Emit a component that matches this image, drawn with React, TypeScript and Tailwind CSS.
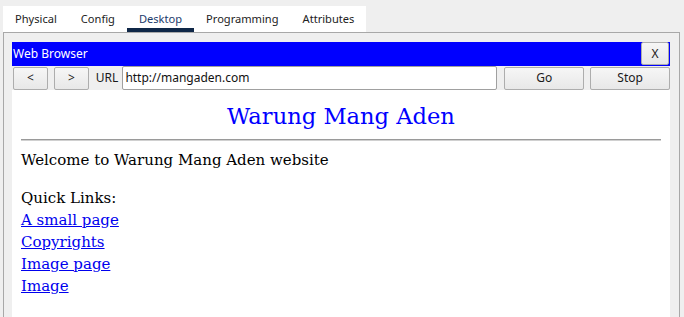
import React from "react";

const tabs = ["Physical", "Config", "Desktop", "Programming", "Attributes"];

function Btn({ children, className = "" }: { children: React.ReactNode; className?: string }) {
  return (
    <div
      className={`flex items-center justify-center rounded-[2px] border border-[#adadad] bg-gradient-to-b from-[#f6f6f6] to-[#e8e8e8] text-[12px] text-[#1a1a1a] ${className}`}
    >
      {children}
    </div>
  );
}

export default function App() {
  return (
    <div
      className="w-[684px] h-[317px] overflow-hidden bg-[#efefef]"
      style={{ fontFamily: '"Noto Sans", "Open Sans", sans-serif' }}
    >
      <div className="pl-[3px] pt-[6px]">
        <div className="flex h-[26px] w-[363px] bg-white">
          {tabs.map((t) => (
            <div
              key={t}
              className={`relative flex items-center px-3 pt-[1px] text-[11.1px] ${
                t === "Desktop" ? "text-[#1b3a6b]" : "text-[#222]"
              }`}
            >
              {t}
              {t === "Desktop" && (
                <div className="absolute bottom-0 left-0 right-0 h-[4px] bg-[#0f2747]" />
              )}
            </div>
          ))}
        </div>
      </div>
      <div className="ml-[3px] w-[677px] h-[300px] border-l border-r border-t border-[#a8a8a8] pl-[8px] pt-[9px]">
        <div className="w-[658px] h-[300px] bg-white">
          <div className="flex h-[24px] items-center justify-between bg-[#0000ff]">
            <span className="pl-[1px] text-[12px] leading-none text-white">Web Browser</span>
            <Btn className="mr-[1px] h-[23px] w-[28px] self-start">X</Btn>
          </div>
          <div className="flex h-[24px] items-center bg-[#efefef]">
            <Btn className="ml-[1px] h-[23px] w-[35px]">&lt;</Btn>
            <Btn className="ml-[6px] h-[23px] w-[35px]">&gt;</Btn>
            <span className="ml-[7px] text-[12px] text-[#1a1a1a]">URL</span>
            <div className="ml-[4px] flex h-[24px] w-[376px] items-center rounded-[2px] border border-[#a0a0a0] bg-white pl-[2px] text-[12px] text-[#111]">
              http://mangaden.com
            </div>
            <Btn className="ml-[7px] h-[23px] w-[80px]">Go</Btn>
            <Btn className="ml-[6px] h-[23px] w-[80px]">Stop</Btn>
          </div>
          <div
            className="px-[9px] text-black"
            style={{ fontFamily: '"DejaVu Serif", "Liberation Serif", serif' }}
          >
            <div className="pt-[11px] text-center text-[22.6px] leading-[30px] text-[#0000ff]">
              Warung Mang Aden
            </div>
            <div className="mt-[8px] h-[2px] border-t border-[#9a9a9a] border-b-[#d0d0d0] border-b" />
            <div className="mt-[8px] text-[15px] leading-[22px]">Welcome to Warung Mang Aden website</div>
            <div className="mt-[16px] text-[15px] leading-[22px]">Quick Links:</div>
            <div className="flex flex-col items-start text-[15px] leading-[22px] text-[#0000ee]">
              <a className="underline">A small page</a>
              <a className="underline">Copyrights</a>
              <a className="underline">Image page</a>
              <a className="underline">Image</a>
            </div>
          </div>
        </div>
      </div>
    </div>
  );
}
